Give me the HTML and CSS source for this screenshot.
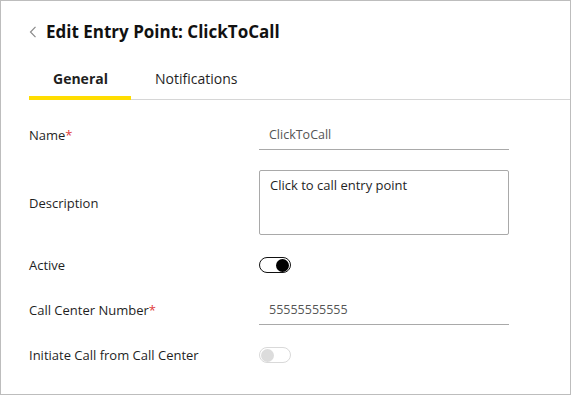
FILE: index.html
```html
<!DOCTYPE html>
<html>
<head>
<meta charset="utf-8">
<link rel="stylesheet" href="styles.css">
</head>
<body>
<div class="frame">
  <div class="header">
    <svg class="back" width="8" height="12" viewBox="0 0 8 12"><path d="M6.5 0.8 L1.5 6 L6.5 11.2" fill="none" stroke="#8a8a8a" stroke-width="1.2"/></svg>
    <h1 class="title">Edit Entry Point: ClickToCall</h1>
  </div>
  <div class="tabs">
    <div class="tab active">General</div>
    <div class="tab">Notifications</div>
  </div>
  <div class="form">
    <div class="row">
      <label class="label">Name<span class="req">*</span></label>
      <div class="input">ClickToCall</div>
    </div>
    <div class="row row-desc">
      <label class="label">Description</label>
      <div class="textarea">Click to call entry point</div>
    </div>
    <div class="row">
      <label class="label">Active</label>
      <div class="toggle on"><span class="knob"></span></div>
    </div>
    <div class="row">
      <label class="label">Call Center Number<span class="req">*</span></label>
      <div class="input">55555555555</div>
    </div>
    <div class="row">
      <label class="label">Initiate Call from Call Center</label>
      <div class="toggle off"><span class="knob"></span></div>
    </div>
  </div>
</div>
</body>
</html>
```
FILE: styles.css
```css
* { box-sizing: border-box; }
html, body { margin: 0; padding: 0; background: #fff; }
body { font-family: "Open Sans", "Noto Sans", sans-serif; color: #1f1f1f; }
.frame {
  width: 571px;
  height: 395px;
  border: 1px solid #bdbdbd;
  background: #fff;
  overflow: hidden;
}
.header {
  display: flex;
  align-items: center;
  height: 43px;
  margin-top: 9px;
  padding-left: 29px;
}
.back { margin-left: -1px; margin-right: 9px; }
.title {
  margin: 0;
  font-size: 17px;
  font-weight: 700;
  color: #111;
}
.tabs {
  display: flex;
  margin-left: 28px;
  height: 47px;
  border-bottom: 1px solid #d6d6d6;
}
.tab {
  padding: 8px 24px 0 24px;
  font-size: 14px;
  display: flex;
  align-items: center;
  color: #1f1f1f;
}
.tab.active {
  font-weight: 700;
  padding-right: 23px;
  border-bottom: 4px solid #ffdd00;
  margin-bottom: -1px;
}
.tab:not(.active) { padding-bottom: 3px; }
.form {
  display: flex;
  flex-direction: column;
  gap: 15px;
  padding-left: 28px;
  padding-top: 20px;
}
.row {
  display: grid;
  grid-template-columns: 230px 250px;
  align-items: center;
  min-height: 30px;
}
.row:first-child { margin-bottom: 5px; }
.label { font-size: 13px; color: #1f1f1f; }
.req { color: #e03c3c; }
.input {
  height: 30px;
  border-bottom: 1px solid #a9a9a9;
  font-size: 12.5px;
  color: #555;
  padding-left: 10px;
  display: flex;
  align-items: center;
}
.textarea {
  height: 65px;
  border: 1px solid #a9a9a9;
  border-radius: 2px;
  font-size: 13px;
  color: #1f1f1f;
  padding: 5px 10px;
}
.toggle {
  width: 32px;
  height: 16px;
  border-radius: 8px;
  display: flex;
  align-items: center;
  padding: 0 1px;
}
.toggle .knob {
  width: 13px;
  height: 13px;
  border-radius: 50%;
}
.toggle.on { border: 1.2px solid #111; justify-content: flex-end; }
.toggle.on .knob { background: #000; }
.toggle.off { border: 1px solid #d9d9d9; justify-content: flex-start; }
.toggle.off .knob { background: #dcdcdc; }
```
